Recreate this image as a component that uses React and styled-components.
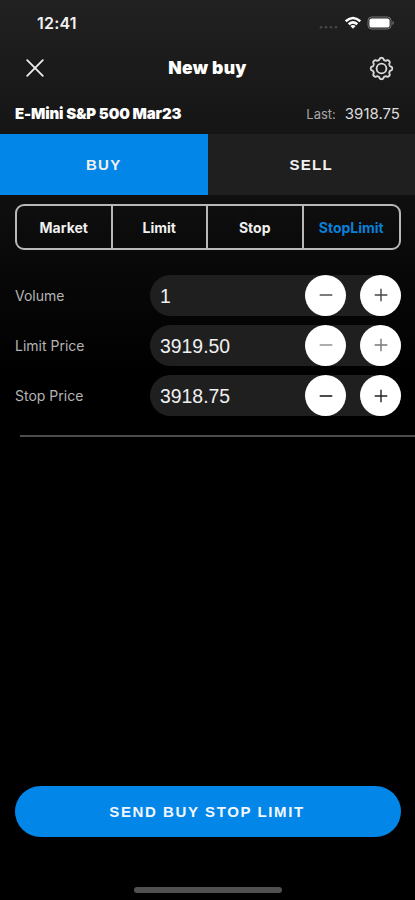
import React from 'react';
import styled, { createGlobalStyle } from 'styled-components';

const GlobalStyle = createGlobalStyle`
    * {
        box-sizing: border-box;
    }
    body {
        margin: 0;
        background: #000;
    }
    button {
        margin: 0;
        padding: 0;
        border: 0;
        background: none;
        font-family: inherit;
        color: inherit;
    }
`;

const Screen = styled.div`
    width: 100%;
    height: 900px;
    display: flex;
    flex-direction: column;
    overflow: hidden;
    color: #fff;
    font-family: Inter, "Liberation Sans", sans-serif;
    white-space: nowrap;
    background: linear-gradient(#212121 0, #181818 100px, #101010 190px, #080808 270px, #000 380px);
`;

const StatusBar = styled.div`
    height: 46px;
    padding: 0 20px 0 37px;
    display: flex;
    align-items: center;
    justify-content: space-between;
`;

const Clock = styled.span`
    font-size: 16px;
    font-weight: 600;
    letter-spacing: 0.2px;
    color: #f2f2f2;
`;

const NavBar = styled.header`
    height: 44px;
    padding: 0 21px 0 26px;
    display: grid;
    grid-template-columns: 35px 1fr 40px;
    align-items: center;
`;

const IconButton = styled.button`
    display: flex;
    justify-content: ${props => props.$end ? 'flex-end' : 'flex-start'};
`;

const Title = styled.h1`
    margin: 0;
    padding-bottom: 1px;
    text-align: center;
    font-size: 17.5px;
    font-weight: 900;
    letter-spacing: 0.3px;
    line-height: 22px;
`;

const Instrument = styled.div`
    height: 44px;
    padding: 2px 15px 0;
    display: flex;
    align-items: center;
    justify-content: space-between;
`;

const Symbol = styled.span`
    font-size: 15px;
    font-weight: 900;
    letter-spacing: -0.15px;
`;

const Quote = styled.span`
    display: flex;
    align-items: baseline;
    gap: 9px;
    font-size: 15px;
    color: #ddd;
`;

const QuoteLabel = styled.span`
    font-size: 13px;
    color: #a6a6a6;
`;

const Sides = styled.div`
    height: 61px;
    display: grid;
    grid-template-columns: 1fr 1fr;
`;

const Side = styled.button`
    background: ${props => props.$active ? '#0286e8' : '#1f1f1f'};
    font-family: "Liberation Sans", sans-serif;
    font-size: 15px;
    font-weight: 700;
    letter-spacing: 1.3px;
    color: #f0f0f0;
`;

const Segments = styled.div`
    height: 46px;
    margin: 9px 14px 0 15px;
    display: grid;
    grid-template-columns: repeat(4, 1fr);
    border: 2px solid #b8b8b8;
    border-radius: 9px;
`;

const Segment = styled.button`
    font-size: 14px;
    font-weight: 700;
    color: ${props => props.$active ? '#0a7fd8' : '#f0f0f0'};

    &:not(:last-child) {
        border-right: 2px solid #b8b8b8;
    }
`;

const Form = styled.div`
    margin-top: 24.6px;
    padding: 0 14px 0 15px;
    display: grid;
    grid-auto-rows: 41px;
    row-gap: 9.3px;
`;

const Row = styled.div`
    display: grid;
    grid-template-columns: 135px 1fr;
    align-items: center;
`;

const Label = styled.label`
    font-size: 14px;
    color: #b4b4b4;
`;

const Field = styled.div`
    height: 41px;
    padding-left: 10px;
    display: flex;
    align-items: center;
    gap: 14px;
    border-radius: 21px;
    background: #1f1f1f;
`;

const Value = styled.span`
    flex: 1;
    padding-top: 2px;
    font-family: "Liberation Sans", sans-serif;
    font-size: 19.4px;
    color: #f0f0f0;
`;

const StepButton = styled.button`
    width: 41px;
    height: 41px;
    display: flex;
    align-items: center;
    justify-content: center;
    border-radius: 50%;
    background: #fff;
    color: ${props => props.$tone};
`;

const Divider = styled.div`
    height: 2px;
    margin: 18.7px 0 0 20px;
    background: #4c4c4c;
`;

const Footer = styled.footer`
    margin-top: auto;
    padding: 0 14px 7px 15px;
    display: flex;
    flex-direction: column;
    align-items: center;
`;

const SendButton = styled.button`
    width: 100%;
    height: 51px;
    padding: 0 2px 1px 0;
    border-radius: 26px;
    background: #0286e8;
    font-family: "Liberation Sans", sans-serif;
    font-size: 15px;
    font-weight: 700;
    letter-spacing: 1.6px;
    color: #f2f7ff;
`;

const HomeIndicator = styled.div`
    width: 148px;
    height: 6px;
    margin-top: 50px;
    border-radius: 3px;
    background: #505050;
`;

const segments = ['Market', 'Limit', 'Stop', 'StopLimit'];

const fields = [
    { label: 'Volume', value: '1', minus: '#444', plus: '#444' },
    { label: 'Limit Price', value: '3919.50', minus: '#8a8a8a', plus: '#777' },
    { label: 'Stop Price', value: '3918.75', minus: '#000', plus: '#222' },
];

// eight-lobed outline of the settings cog
const gearPath = () => {
    const points = [];
    for (let i = 0; i <= 160; i += 1) {
        const a = (i / 160) * Math.PI * 2;
        const r = 9.3 + 1.05 * Math.tanh(1.6 * Math.cos(8 * a));
        points.push(`${(12 + r * Math.sin(a)).toFixed(2)} ${(12 - r * Math.cos(a)).toFixed(2)}`);
    }
    return `M${points.join('L')}Z`;
};

const StatusIcons = () => (
    <svg width="78" height="18" viewBox="0 0 78 18" fill="none">
        <g fill="#484848">
            <circle cx="4" cy="13.3" r="1.3" />
            <circle cx="9" cy="13.3" r="1.3" />
            <circle cx="14" cy="13.3" r="1.3" />
            <circle cx="19" cy="13.3" r="1.3" />
        </g>
        <g stroke="#fff" strokeWidth="2.5">
            <path d="M28.7 7.2Q36 .8 43.3 7.2" />
            <path d="M31.7 10.3Q36 6.5 40.3 10.3" />
        </g>
        <path d="M33.4 12Q36 9.8 38.6 12L36 14.8Z" fill="#fff" />
        <rect x="51" y="3" width="23" height="12" rx="3.6" stroke="#777" />
        <rect x="52.4" y="4.4" width="20.2" height="9.2" rx="2.2" fill="#fff" />
        <path d="M75.5 7v4c1.6-.5 1.6-3.5 0-4Z" fill="#888" />
    </svg>
);

const CloseIcon = () => (
    <svg width="18" height="18" viewBox="0 0 18 18" stroke="#eee" strokeWidth="1.8" strokeLinecap="round">
        <path d="M1.2 1.2l15.6 15.6M16.8 1.2L1.2 16.8" />
    </svg>
);

const GearIcon = () => (
    <svg width="25" height="25" viewBox="0 0 24 24" fill="none" stroke="#d8d8d8" strokeWidth="1.8">
        <path d={gearPath()} strokeLinejoin="round" />
        <circle cx="12" cy="12" r="4.7" />
    </svg>
);

const StepIcon = ({ plus }) => (
    <svg width="14" height="14" viewBox="0 0 14 14" stroke="currentColor" strokeWidth="1.4">
        <path d={plus ? 'M.7 7h12.6M7 .7v12.6' : 'M.7 7h12.6'} />
    </svg>
);

export default () => (
    <>
        <GlobalStyle />
        <Screen>
            <StatusBar>
                <Clock>12:41</Clock>
                <StatusIcons />
            </StatusBar>
            <NavBar>
                <IconButton aria-label="Close"><CloseIcon /></IconButton>
                <Title>New buy</Title>
                <IconButton $end aria-label="Settings"><GearIcon /></IconButton>
            </NavBar>
            <Instrument>
                <Symbol>E-Mini S&amp;P 500 Mar23</Symbol>
                <Quote>
                    <QuoteLabel>Last:</QuoteLabel>
                    3918.75
                </Quote>
            </Instrument>
            <Sides>
                <Side $active>BUY</Side>
                <Side>SELL</Side>
            </Sides>
            <Segments>
                {segments.map(name => (
                    <Segment key={name} $active={name === 'StopLimit'}>{name}</Segment>
                ))}
            </Segments>
            <Form>
                {fields.map(({ label, value, minus, plus }) => (
                    <Row key={label}>
                        <Label>{label}</Label>
                        <Field>
                            <Value>{value}</Value>
                            <StepButton $tone={minus} aria-label="Decrease"><StepIcon /></StepButton>
                            <StepButton $tone={plus} aria-label="Increase"><StepIcon plus /></StepButton>
                        </Field>
                    </Row>
                ))}
            </Form>
            <Divider />
            <Footer>
                <SendButton>SEND BUY STOP LIMIT</SendButton>
                <HomeIndicator />
            </Footer>
        </Screen>
    </>
);
